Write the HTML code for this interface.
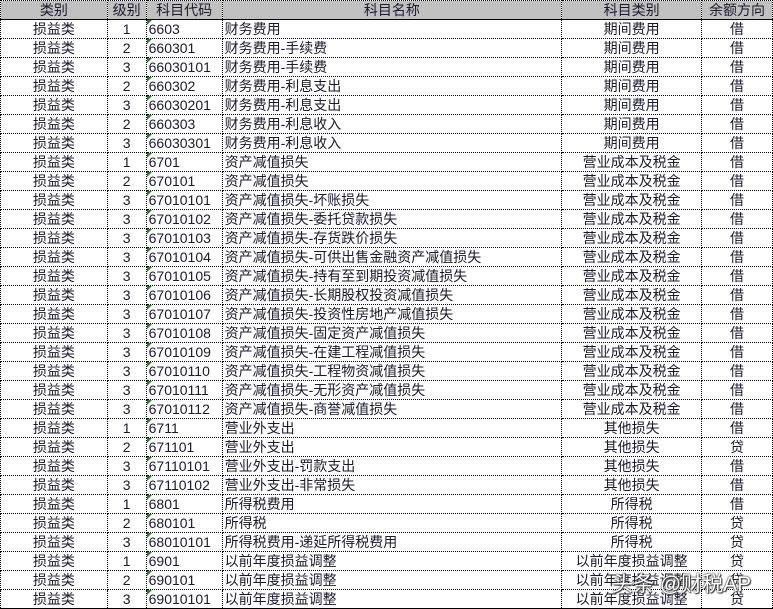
<!DOCTYPE html>
<html><head><meta charset="utf-8"><style>
body{margin:0;background:#fff;width:773px;height:609px;overflow:hidden}
table{border-collapse:collapse;table-layout:fixed;font-family:"Liberation Sans","Noto Sans CJK SC",sans-serif;font-size:14px;color:#1a1a2e}
td,th{height:18px;padding:0 2px;border:1px dotted #000;white-space:nowrap;overflow:hidden;line-height:18px}
th{background:#c0c0c0;font-weight:normal;border-bottom:1px solid #000}
td:nth-child(1),td:nth-child(2),td:nth-child(5),td:nth-child(6){text-align:center}
td:nth-child(3){position:relative}
td:nth-child(3)::before{content:"";position:absolute;left:0;top:0;border-top:5px solid #1a8a1a;border-right:5px solid transparent}
tr:last-child td{border-bottom:1px solid #000}
.wm{position:absolute;left:612px;top:568px;font:21px "Liberation Sans","Noto Sans CJK SC",sans-serif;color:#fff;text-shadow:0 0 1px #222,0 0 2px #222,1px 1px 1px #444}
</style></head><body>
<table>
<colgroup><col style="width:107px"><col style="width:39px"><col style="width:76px"><col style="width:340px"><col style="width:140px"><col style="width:71px"></colgroup>
<tr><th>类别</th><th>级别</th><th>科目代码</th><th>科目名称</th><th>科目类别</th><th>余额方向</th></tr>
<tr><td>损益类</td><td>1</td><td>6603</td><td>财务费用</td><td>期间费用</td><td>借</td></tr>
<tr><td>损益类</td><td>2</td><td>660301</td><td>财务费用-手续费</td><td>期间费用</td><td>借</td></tr>
<tr><td>损益类</td><td>3</td><td>66030101</td><td>财务费用-手续费</td><td>期间费用</td><td>借</td></tr>
<tr><td>损益类</td><td>2</td><td>660302</td><td>财务费用-利息支出</td><td>期间费用</td><td>借</td></tr>
<tr><td>损益类</td><td>3</td><td>66030201</td><td>财务费用-利息支出</td><td>期间费用</td><td>借</td></tr>
<tr><td>损益类</td><td>2</td><td>660303</td><td>财务费用-利息收入</td><td>期间费用</td><td>借</td></tr>
<tr><td>损益类</td><td>3</td><td>66030301</td><td>财务费用-利息收入</td><td>期间费用</td><td>借</td></tr>
<tr><td>损益类</td><td>1</td><td>6701</td><td>资产减值损失</td><td>营业成本及税金</td><td>借</td></tr>
<tr><td>损益类</td><td>2</td><td>670101</td><td>资产减值损失</td><td>营业成本及税金</td><td>借</td></tr>
<tr><td>损益类</td><td>3</td><td>67010101</td><td>资产减值损失-坏账损失</td><td>营业成本及税金</td><td>借</td></tr>
<tr><td>损益类</td><td>3</td><td>67010102</td><td>资产减值损失-委托贷款损失</td><td>营业成本及税金</td><td>借</td></tr>
<tr><td>损益类</td><td>3</td><td>67010103</td><td>资产减值损失-存货跌价损失</td><td>营业成本及税金</td><td>借</td></tr>
<tr><td>损益类</td><td>3</td><td>67010104</td><td>资产减值损失-可供出售金融资产减值损失</td><td>营业成本及税金</td><td>借</td></tr>
<tr><td>损益类</td><td>3</td><td>67010105</td><td>资产减值损失-持有至到期投资减值损失</td><td>营业成本及税金</td><td>借</td></tr>
<tr><td>损益类</td><td>3</td><td>67010106</td><td>资产减值损失-长期股权投资减值损失</td><td>营业成本及税金</td><td>借</td></tr>
<tr><td>损益类</td><td>3</td><td>67010107</td><td>资产减值损失-投资性房地产减值损失</td><td>营业成本及税金</td><td>借</td></tr>
<tr><td>损益类</td><td>3</td><td>67010108</td><td>资产减值损失-固定资产减值损失</td><td>营业成本及税金</td><td>借</td></tr>
<tr><td>损益类</td><td>3</td><td>67010109</td><td>资产减值损失-在建工程减值损失</td><td>营业成本及税金</td><td>借</td></tr>
<tr><td>损益类</td><td>3</td><td>67010110</td><td>资产减值损失-工程物资减值损失</td><td>营业成本及税金</td><td>借</td></tr>
<tr><td>损益类</td><td>3</td><td>67010111</td><td>资产减值损失-无形资产减值损失</td><td>营业成本及税金</td><td>借</td></tr>
<tr><td>损益类</td><td>3</td><td>67010112</td><td>资产减值损失-商誉减值损失</td><td>营业成本及税金</td><td>借</td></tr>
<tr><td>损益类</td><td>1</td><td>6711</td><td>营业外支出</td><td>其他损失</td><td>借</td></tr>
<tr><td>损益类</td><td>2</td><td>671101</td><td>营业外支出</td><td>其他损失</td><td>贷</td></tr>
<tr><td>损益类</td><td>3</td><td>67110101</td><td>营业外支出-罚款支出</td><td>其他损失</td><td>借</td></tr>
<tr><td>损益类</td><td>3</td><td>67110102</td><td>营业外支出-非常损失</td><td>其他损失</td><td>借</td></tr>
<tr><td>损益类</td><td>1</td><td>6801</td><td>所得税费用</td><td>所得税</td><td>借</td></tr>
<tr><td>损益类</td><td>2</td><td>680101</td><td>所得税</td><td>所得税</td><td>贷</td></tr>
<tr><td>损益类</td><td>3</td><td>68010101</td><td>所得税费用-递延所得税费用</td><td>所得税</td><td>贷</td></tr>
<tr><td>损益类</td><td>1</td><td>6901</td><td>以前年度损益调整</td><td>以前年度损益调整</td><td>贷</td></tr>
<tr><td>损益类</td><td>2</td><td>690101</td><td>以前年度损益调整</td><td>以前年度损益调整</td><td>贷</td></tr>
<tr><td>损益类</td><td>3</td><td>69010101</td><td>以前年度损益调整</td><td>以前年度损益调整</td><td>贷</td></tr>
</table>
<div class="wm">头条 @财税AP</div>
</body></html>
